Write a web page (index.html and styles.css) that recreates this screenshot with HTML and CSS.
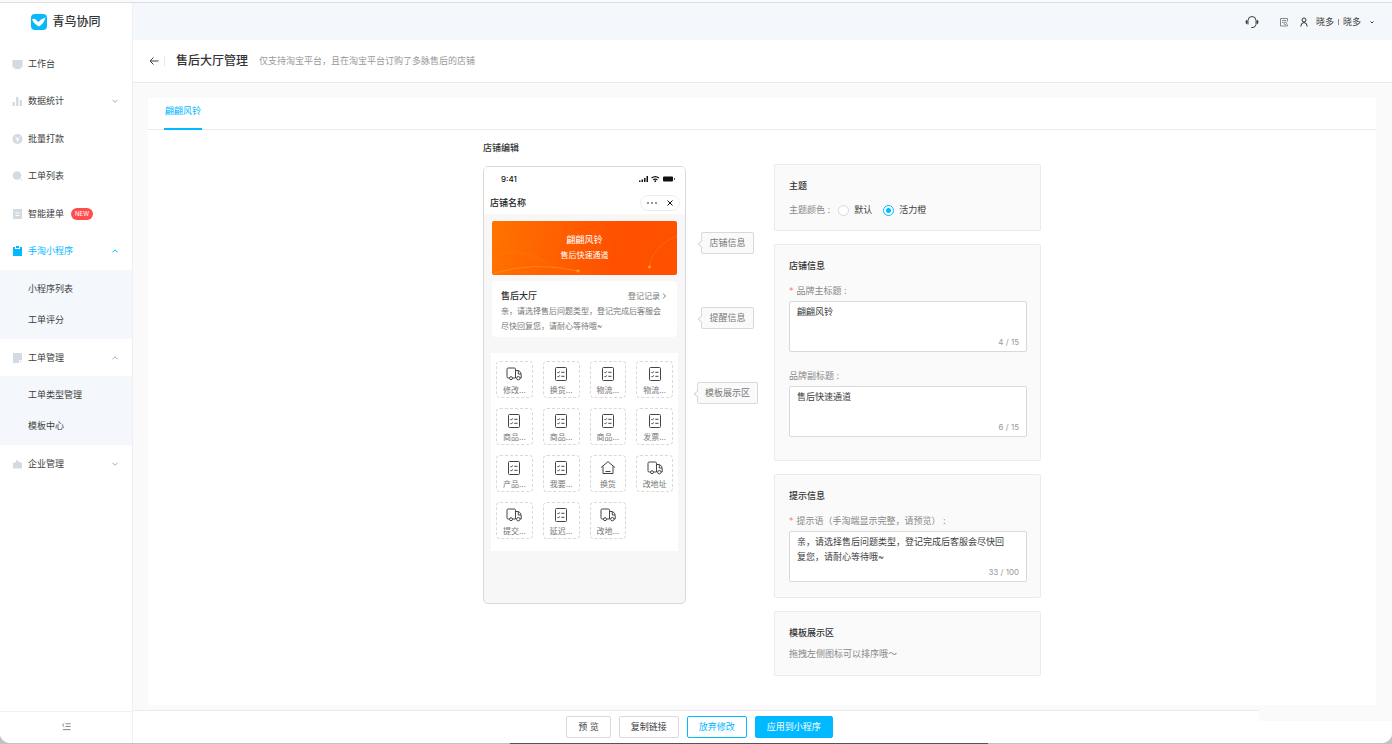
FILE: index.html
```html
<!DOCTYPE html>
<html lang="zh-CN">
<head>
<meta charset="utf-8">
<title>售后大厅管理</title>
<link rel="stylesheet" href="styles.css">
</head>
<body>
<svg class="defs" aria-hidden="true">
  <symbol id="truck" viewBox="0 0 16 16"><path d="M3.500 12H2.200A1.200 1.200 0 0 1 1 10.800V3.200A1.200 1.200 0 0 1 2.200 2H8.300A1.200 1.200 0 0 1 9.500 3.200V12H6.500M9.500 4.500H12.600Q15.200 6 15.200 8.500V12H14M12.300 5V8H15"/><circle cx="5" cy="12.200" r="1.500"/><circle cx="12.300" cy="12.200" r="1.700"/></symbol>
  <symbol id="list" viewBox="0 0 16 16"><rect x="2.500" y="1.500" width="11" height="13" rx="1"/><path d="M4.500 6.200l.9.900 1.300-1.700M8.300 6.300H11.500M4.500 10.200l.9.900 1.300-1.700M8.300 10.300H11.500"/></symbol>
  <symbol id="house" viewBox="0 0 16 16"><path d="M1 7.500L8 1.700L15 7.500M3 6.300V13.500H13V6.300M5.500 11.500H10.500"/></symbol>
  <symbol id="down" viewBox="0 0 8 8"><path d="M1.500 2.800L4 5.300L6.500 2.800"/></symbol>
  <symbol id="up" viewBox="0 0 8 8"><path d="M1.500 5.300L4 2.800L6.500 5.300"/></symbol>
</svg>
<div class="window">
  <aside class="sidebar">
    <div class="brand">
      <svg class="logo" viewBox="0 0 16 16"><rect width="16" height="16" rx="4" fill="#08b8fb"/><path d="M1 5.500Q3 3.700 5 5.700L7.300 8Q10 4.800 14.500 3.500Q13 9.500 8 12.500Q3.500 10.500 1 5.500Z" fill="#fff"/></svg>
      <span>青鸟协同</span>
    </div>
    <nav class="menu">
      <div class="menu-top">
        <a class="item" href="#"><svg class="mi" viewBox="0 0 10 10"><path d="M0 1H10V8.500H0ZM2 8.500H8V10H2Z"/></svg>工作台</a>
        <a class="item" href="#"><svg class="mi" viewBox="0 0 10 10"><path d="M0 6H2.300V10H0ZM3.500 1H6V10H3.500ZM7.200 4H9.500V10H7.200Z"/></svg>数据统计<svg class="caret"><use href="#down"/></svg></a>
        <a class="item" href="#"><svg class="mi" viewBox="0 0 10 10"><circle cx="5" cy="5" r="5"/><path d="M3 2.500L5 5L7 2.500M5 5V8M3.300 5.500H6.700" fill="none" stroke="#fff"/></svg>批量打款</a>
        <a class="item" href="#"><svg class="mi" viewBox="0 0 10 10"><circle cx="4.500" cy="4.500" r="4.300"/><path d="M7.500 7.500L9.700 9.700" stroke="#d3dbe2"/></svg>工单列表</a>
        <a class="item" href="#"><svg class="mi" viewBox="0 0 10 10"><path d="M.5 0H9.500V10H.500Z"/><path d="M3 4H7M3 6.500H7" stroke="#fff"/></svg>智能建单<span class="new">NEW</span></a>
        <a class="item active" href="#"><svg class="mi" viewBox="0 0 10 10"><path d="M.5 1H2.500V3H7.500V1H9.500V10H.500ZM3.500 0H6.500V2H3.500Z"/></svg>手淘小程序<svg class="caret"><use href="#up"/></svg></a>
      </div>
      <div class="submenu"><a href="#">小程序列表</a><a href="#">工单评分</a></div>
      <a class="item" href="#"><svg class="mi" viewBox="0 0 10 10"><path d="M.5 0H9.500V7H6.500V10H.500ZM7.300 7.800H9.500L7.300 10Z"/></svg>工单管理<svg class="caret"><use href="#up"/></svg></a>
      <div class="submenu"><a href="#">工单类型管理</a><a href="#">模板中心</a></div>
      <a class="item" href="#"><svg class="mi" viewBox="0 0 10 10"><path d="M.5 4L3.500 3V.500L6 2.500L9.500 4V9.500H.500Z"/></svg>企业管理<svg class="caret"><use href="#down"/></svg></a>
    </nav>
    <button class="fold" type="button" aria-label="收起菜单"><svg viewBox="0 0 10 10"><path d="M4 2H9.500M4 5H9.500M1 8.500H9.500M2.500 1.500L.500 3.500L2.500 5.500"/></svg></button>
  </aside>

  <div class="main">
    <header class="topbar">
      <svg class="headset" viewBox="0 0 14 14"><path d="M3 9.500V5.500A4 4 0 0 1 11 5.500V9.500Q10.500 12.300 8 12.500H6.200"/><path d="M2.300 5.500Q.5 6.800 2.300 8.500M11.700 5.500Q13.500 6.800 11.700 8.500" stroke-width="1.800"/></svg>
      <svg class="doc" viewBox="0 0 10 10"><path d="M8.500 4.500V1.500H1.500V9H8.500V7.500M3 3.500H7M3 5.500H4.500"/><circle cx="6.300" cy="6.300" r="1.300"/></svg>
      <svg class="person" viewBox="0 0 10 10"><circle cx="5" cy="3" r="2"/><path d="M1.800 9.500Q2 5.500 5 5.500T8.200 9.500"/></svg>
      <button class="account" type="button">晓多<i></i>晓多<svg viewBox="0 0 8 8"><path d="M2.500 3.500L4 5L5.500 3.500"/></svg></button>
    </header>
    <div class="pagehead">
      <a class="back" href="#" aria-label="返回"><svg viewBox="0 0 10 10"><path d="M9.500 5H1M4.500 1.500L1 5L4.500 8.500"/></svg></a>
      <h1>售后大厅管理</h1>
      <p>仅支持淘宝平台，且在淘宝平台订购了多脉售后的店铺</p>
    </div>

    <main class="content">
      <section class="panel">
        <div class="tabs"><a class="tab" href="#">翩翩风铃</a></div>
        <div class="editor">
          <div class="preview">
            <h2>店铺编辑</h2>
            <div class="phone">
              <div class="status"><span>9:41</span>
                <svg viewBox="0 0 36 8"><path d="M0 5.500H1.500V7H0ZM2.500 4.500H4V7H2.500ZM5 3H6.500V7H5ZM7.500 1H9V7H7.500Z"/><path d="M12.500 3Q16.300 .2 20 3M14.200 4.800Q16.300 3.300 18.400 4.800" fill="none" stroke="#111" stroke-width="1.200"/><circle cx="16.300" cy="6.200" r=".9"/><rect x="24" y="1.500" width="10" height="5" rx="1"/><path d="M35 3H35.700V5H35Z"/></svg>
              </div>
              <div class="shopbar"><strong>店铺名称</strong>
                <span class="capsule"><svg viewBox="0 0 12 8"><circle cx="2" cy="4" r=".8"/><circle cx="6" cy="4" r=".8"/><circle cx="10" cy="4" r=".8"/></svg><svg class="close" viewBox="0 0 8 8"><path d="M1.500 1.500L6.500 6.500M6.500 1.500L1.500 6.500"/></svg></span>
              </div>
              <div class="screen">
                <div class="banner">
                  <svg viewBox="0 0 185 54" preserveAspectRatio="none"><path d="M0 37Q24 25 48 38T66 54M0 15Q5 17 1 20" opacity=".3"/><path d="M2 52Q44 40 86 50"/><path d="M157 46Q161 24 185 15" opacity=".5"/><circle cx="86" cy="50" r="1.300"/><circle cx="157.500" cy="46" r="1.300"/></svg>
                  <b>翩翩风铃</b><span>售后快速通道</span>
                </div>
                <div class="notice">
                  <div class="notice-head"><strong>售后大厅</strong><a href="#">登记记录<svg viewBox="0 0 8 8"><path d="M3 1.500L5.500 4L3 6.500"/></svg></a></div>
                  <p>亲，请选择售后问题类型，登记完成后客服会尽快回复您，请耐心等待哦~</p>
                </div>
              </div>
              <div class="tiles">
                <div class="tile"><svg><use href="#truck"/></svg>修改...</div>
                <div class="tile"><svg><use href="#list"/></svg>换货...</div>
                <div class="tile"><svg><use href="#list"/></svg>物流...</div>
                <div class="tile"><svg><use href="#list"/></svg>物流...</div>
                <div class="tile"><svg><use href="#list"/></svg>商品...</div>
                <div class="tile"><svg><use href="#list"/></svg>商品...</div>
                <div class="tile"><svg><use href="#list"/></svg>商品...</div>
                <div class="tile"><svg><use href="#list"/></svg>发票...</div>
                <div class="tile"><svg><use href="#list"/></svg>产品...</div>
                <div class="tile"><svg><use href="#list"/></svg>我要...</div>
                <div class="tile"><svg><use href="#house"/></svg>换货</div>
                <div class="tile"><svg><use href="#truck"/></svg>改地址</div>
                <div class="tile"><svg><use href="#truck"/></svg>提交...</div>
                <div class="tile"><svg><use href="#list"/></svg>延迟...</div>
                <div class="tile"><svg><use href="#truck"/></svg>改地...</div>
              </div>
            </div>
          </div>

          <div class="tags"><span class="tag">店铺信息</span><span class="tag">提醒信息</span><span class="tag">模板展示区</span></div>

          <form class="settings">
            <fieldset class="card">
              <h3>主题</h3>
              <div class="radios"><span class="label">主题颜色 :</span>
                <label><input type="radio" name="theme">默认</label>
                <label><input type="radio" name="theme" checked>活力橙</label>
              </div>
            </fieldset>
            <fieldset class="card shop">
              <h3>店铺信息</h3>
              <div class="field"><label for="title"><em>*</em>品牌主标题 :</label>
                <div class="area"><textarea id="title">翩翩风铃</textarea><span class="count">4 / 15</span></div></div>
              <div class="field"><label for="subtitle">品牌副标题 :</label>
                <div class="area"><textarea id="subtitle">售后快速通道</textarea><span class="count">6 / 15</span></div></div>
            </fieldset>
            <fieldset class="card">
              <h3>提示信息</h3>
              <div class="field"><label for="tip"><em>*</em>提示语（手淘端显示完整，请预览） :</label>
                <div class="area"><textarea id="tip">亲，请选择售后问题类型，登记完成后客服会尽快回复您，请耐心等待哦~</textarea><span class="count">33 / 100</span></div></div>
            </fieldset>
            <fieldset class="card">
              <h3>模板展示区</h3>
              <p>拖拽左侧图标可以排序哦～</p>
            </fieldset>
          </form>
        </div>
      </section>
    </main>

    <footer class="actions">
      <button type="button">预 览</button>
      <button type="button">复制链接</button>
      <button type="button" class="outline">放弃修改</button>
      <button type="button" class="primary">应用到小程序</button>
    </footer>
  </div>
</div>
</body>
</html>
```
FILE: styles.css
```css
* { box-sizing: border-box; }
body {
  margin: 0;
  height: 100vh;
  padding: 2px 0 1px;
  background: linear-gradient(90deg, #555 0 0) 510px 100% / 478px 1px no-repeat, linear-gradient(#fafafb 0 50%, #bfc1c3 50%);
  font: 9px/16px Inter, "Noto Sans CJK SC", sans-serif;
  color: #404040;
}
h1, h2, h3, p { margin: 0; }
a { color: inherit; text-decoration: none; }
button, textarea, input { font: inherit; color: inherit; margin: 0; }
svg { fill: none; stroke: currentColor; flex: none; }
.defs { position: absolute; width: 0; height: 0; }

.window {
  display: flex;
  height: 100%;
  border-top: 1px solid #dcdee2;
  border-radius: 0 0 10px 10px;
  overflow: hidden;
  background: #fafafa;
}

.sidebar {
  display: flex;
  flex-direction: column;
  flex: none;
  width: 133px;
  background: #fff;
  border-right: 1px solid #f0f0f0;
}
.brand {
  display: flex;
  align-items: center;
  justify-content: center;
  gap: 5px;
  height: 37px;
  margin-bottom: 5px;
  font-size: 12px;
  font-weight: 500;
  color: #333;
}
.logo { width: 16px; height: 16px; stroke: none; }
.menu { flex: 1; }
.menu-top { display: grid; grid-auto-rows: 1fr; height: 225px; }
.item { display: flex; align-items: center; height: 37px; padding: 0 13px 0 12px; }
.mi { width: 11px; height: 10px; margin-right: 5px; fill: #d3dbe2; stroke: none; }
.caret { width: 8px; height: 8px; margin-left: auto; stroke: #aaa; }
.active { color: #00b9ff; }
.active .mi { fill: #00b9ff; }
.active .caret { stroke: #00b9ff; }
.new {
  margin-left: 7px;
  padding: 0 4px;
  border-radius: 6px;
  background: #ff4d4f;
  color: #fff;
  font-size: 6px;
  line-height: 12px;
}
.submenu { display: grid; padding: 3px 0 4px; background: #f4f8fc; }
.submenu a { padding-left: 28px; line-height: 31px; }
.fold {
  height: 32px;
  padding: 0;
  border: 0;
  border-top: 1px solid #f0f0f0;
  background: #fff;
  color: #777;
}
.fold svg { width: 9px; height: 9px; }

.main { display: flex; flex-direction: column; flex: 1; min-width: 0; }
.topbar {
  display: flex;
  align-items: center;
  justify-content: flex-end;
  height: 37px;
  padding-right: 16px;
  background: #f4f8fc;
}
.headset { width: 14px; height: 14px; margin-right: 20px; }
.doc { width: 10px; height: 10px; margin-right: 10px; stroke: #888; }
.person { width: 10px; height: 10px; margin-right: 7px; stroke: #333; }
.account { display: flex; align-items: center; padding: 0; border: 0; background: none; }
.account i { width: 1px; height: 6px; margin: 0 4px; background: #888; }
.account svg { width: 8px; height: 8px; margin-left: 7px; }

.pagehead {
  display: flex;
  align-items: center;
  height: 43px;
  padding-left: 16px;
  background: #fff;
  border-bottom: 1px solid #ebebeb;
}
.back { display: flex; padding-right: 5px; border-right: 1px solid #e8e8e8; }
.back svg { width: 10px; height: 10px; }
h1 { margin: 0 11px; font-size: 12px; font-weight: 500; color: #333; }
.pagehead p { color: #999; }

.content { flex: 1; padding: 15px 16px 5px 15px; }
.panel { height: 100%; background: #fff; }
.tabs { display: flex; padding-left: 16px; border-bottom: 1px solid #ebebeb; }
.tab { margin-bottom: -1px; padding: 5px 1px 9px; border-bottom: 2px solid #00b9ff; color: #00b9ff; }
.editor { display: flex; justify-content: center; }

.preview { padding-top: 10px; }
h2, h3 { font-size: 9px; font-weight: 500; color: #333; }
h2 { margin-bottom: 10px; }
.phone {
  width: 203px;
  min-height: 438px;
  border: 1px solid #d9d9d9;
  border-radius: 5px;
  overflow: hidden;
  background: #f7f7f7;
}
.status {
  display: flex;
  align-items: center;
  justify-content: space-between;
  padding: 4px 10px 4px 17px;
  background: #fff;
  font-size: 8px;
  font-weight: 500;
  color: #111;
}
.status svg { width: 36px; height: 8px; fill: #111; stroke: none; }
.shopbar {
  display: flex;
  align-items: center;
  justify-content: space-between;
  height: 23px;
  padding: 0 5px 0 6px;
  background: #fff;
}
.shopbar strong { font-weight: 500; color: #222; }
.capsule {
  display: flex;
  align-items: center;
  gap: 8px;
  padding: 3px 5px;
  border: 1px solid #eee;
  border-radius: 8px;
  color: #111;
}
.capsule svg { width: 12px; height: 8px; fill: #111; stroke: none; }
.capsule .close { width: 8px; stroke: #111; }
.screen { display: grid; gap: 6px; padding: 7px 8px 16px; }
.banner {
  position: relative;
  display: flex;
  flex-direction: column;
  align-items: center;
  padding: 11px 0 12px;
  border-radius: 2px;
  background: linear-gradient(100deg, #ff7300, #ff5000 65%);
  color: #fff;
  font-size: 8px;
  line-height: 15px;
}
.banner b { font-size: 9px; font-weight: 400; line-height: 16px; }
.banner svg { position: absolute; inset: 0; width: 100%; height: 100%; stroke: #ff9a1f; stroke-width: 0.6; }
.banner circle { fill: #ffa51f; }
.notice { padding: 7px 9px 2px; border-radius: 4px; background: #fff; font-size: 8px; color: #777; }
.notice-head { display: flex; justify-content: space-between; font-size: 8px; }
.notice-head strong { font-weight: 500; font-size: 9px; color: #333; }
.notice-head a { display: flex; align-items: center; }
.notice-head svg { width: 8px; height: 8px; }
.notice p { line-height: 15px; padding-bottom: 1px; }
.tiles {
  display: grid;
  grid-template-columns: repeat(4, 1fr);
  gap: 10px;
  margin: 0 7px;
  padding: 8px 5px 12px;
  background: #fff;
}
.tile {
  display: flex;
  flex-direction: column;
  align-items: center;
  height: 37px;
  padding-top: 4px;
  border: 1px dashed #d9d9d9;
  border-radius: 4px;
  font-size: 8px;
  color: #777;
}
.tile svg { width: 16px; height: 16px; color: #444; }

.tags {
  display: flex;
  flex-direction: column;
  align-items: center;
  gap: 53px;
  width: 61px;
  margin: 0 16px 0 11px;
  padding-top: 102px;
}
.tag {
  position: relative;
  padding: 2px 7px;
  border: 1px solid #d9d9d9;
  border-radius: 2px;
  background: #fafafa;
  line-height: 16px;
  white-space: nowrap;
  color: #777;
}
.tag::before {
  content: "";
  position: absolute;
  left: -3px;
  top: 8px;
  width: 5px;
  height: 5px;
  border: solid #d9d9d9;
  border-width: 0 0 1px 1px;
  background: #fafafa;
  transform: rotate(45deg);
}

.settings { display: grid; align-content: start; gap: 13px; width: 267px; padding-top: 34px; }
.card {
  min-width: 0;
  margin: 0;
  padding: 13px 13px 12px 14px;
  border: 1px solid #ebebeb;
  border-radius: 2px;
  background: #fafafa;
  color: #888;
}
.card p { padding: 5px 0 1px; }
.radios { display: flex; align-items: center; padding-top: 8px; }
.radios label { display: flex; align-items: center; margin-left: 8px; color: #404040; }
.radios label + label { margin-left: 11px; }
input[type="radio"] {
  appearance: none;
  width: 11px;
  height: 11px;
  margin-right: 5px;
  border: 1px solid #d9d9d9;
  border-radius: 50%;
  background: #fff;
}
input[type="radio"]:checked { border-color: #00b9ff; background: radial-gradient(#00b9ff 2px, #fff 3px); }
.field { padding: 9px 0 3px; }
.field + .field { padding-top: 13px; }
.shop { padding-bottom: 20px; }
.field label { display: block; margin-bottom: 2px; }
em { margin-right: 3px; font-style: normal; color: #ff7875; }
.area { position: relative; display: flex; }
textarea {
  width: 100%;
  height: 51px;
  padding: 2px 14px 0 7px;
  border: 1px solid #d9d9d9;
  border-radius: 2px;
  background: #fff;
  line-height: 15px;
  resize: none;
  color: #404040;
  overflow: hidden;
}
.count { position: absolute; right: 8px; bottom: 2px; font-size: 8px; color: #999; }

.actions {
  position: relative;
  display: flex;
  justify-content: center;
  gap: 8px;
  padding: 5px 126px 5px 0;
  border-top: 1px solid #ebebeb;
  background: #fff;
}
.actions::after {
  content: "";
  position: absolute;
  top: -1px;
  right: 0;
  width: 133px;
  height: 11px;
  background: #fafafa;
}
.actions button {
  height: 22px;
  padding: 0 11px;
  border: 1px solid #d9d9d9;
  border-radius: 2px;
  background: #fff;
}
.actions .outline { border-color: #00b9ff; color: #00b9ff; }
.actions .primary { border-color: #00b9ff; background: #00b9ff; color: #fff; }
```
